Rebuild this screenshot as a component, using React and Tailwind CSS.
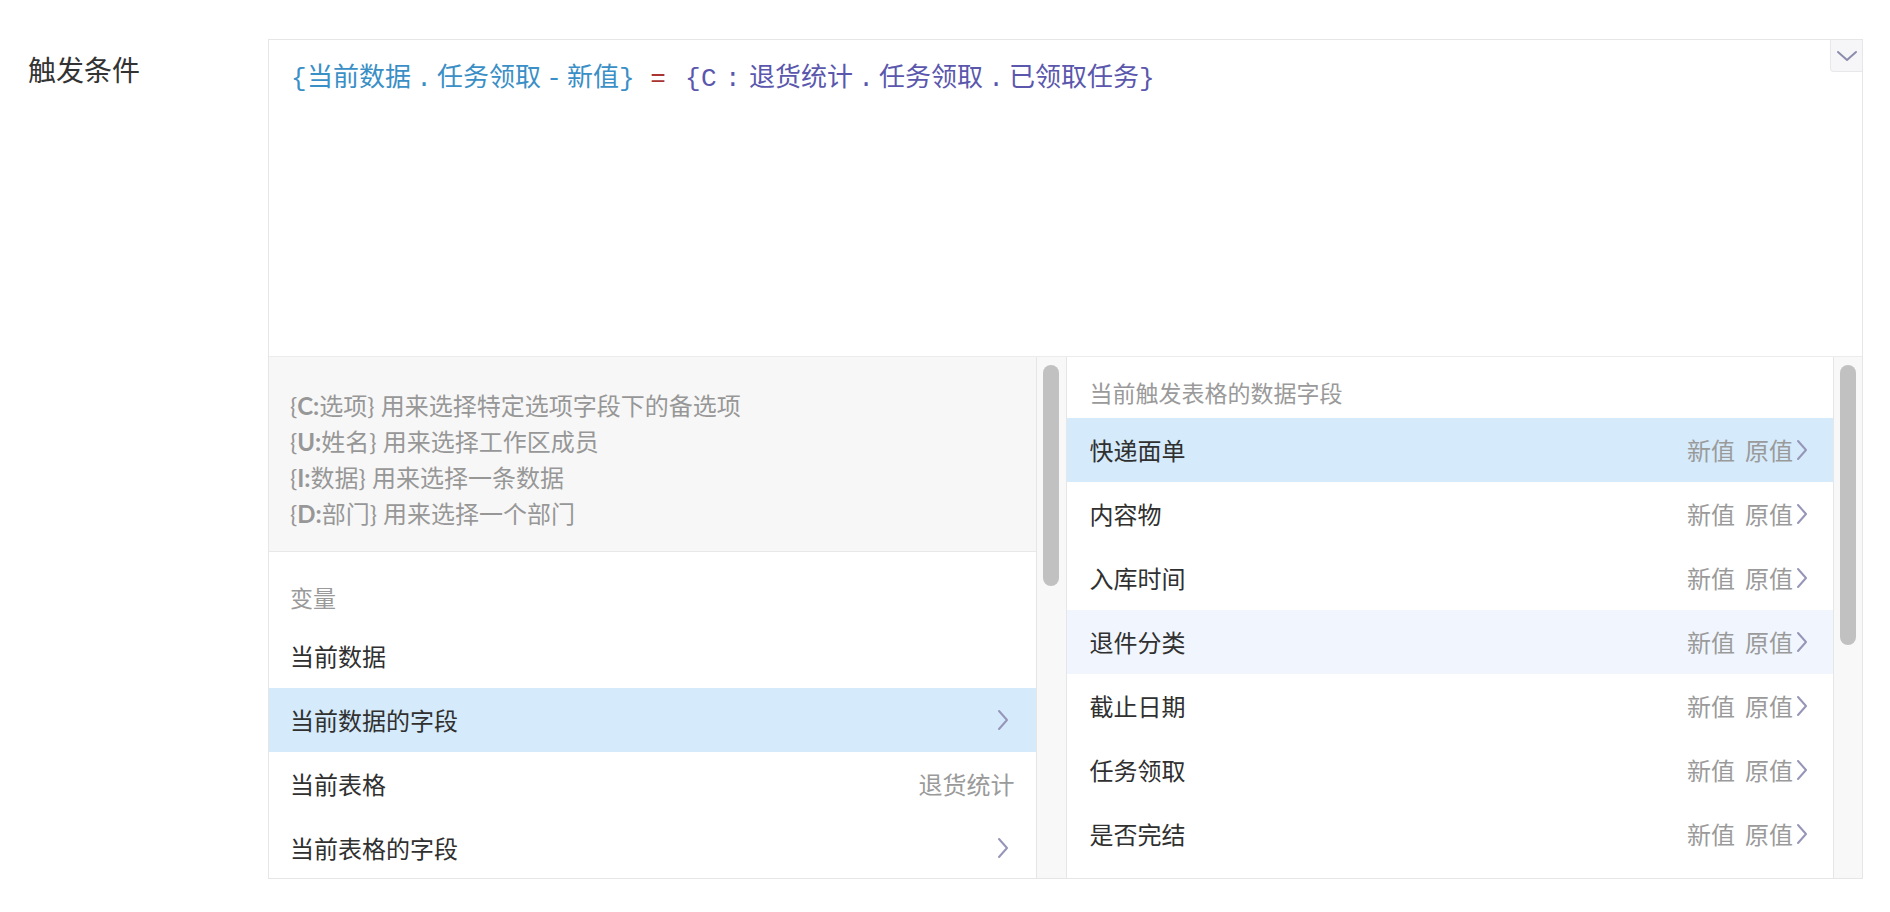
import React from "react";

const cjk = { fontFamily: '"Noto Sans CJK SC", "Noto Sans", sans-serif' };
const mono = { fontFamily: '"Liberation Mono", "Noto Sans CJK SC", monospace' };

function Chevron() {
  return (
    <svg width="14" height="24" viewBox="0 0 14 24">
      <polyline points="3,3 11,12 3,21" fill="none" stroke="#9595b8" strokeWidth="2" strokeLinecap="round" strokeLinejoin="round" />
    </svg>
  );
}

function Ob() {
  return <span className="inline-block w-[16px] text-left" style={mono}>{"{"}</span>;
}
function Cb() {
  return <span className="inline-block w-[12px] text-left" style={mono}>{"}"}</span>;
}
function P({ c }) {
  return <span className="inline-block w-[26px] text-center" style={mono}>{c}</span>;
}
function L({ c }) {
  return <span className="inline-block w-[24px] text-left" style={mono}>{c}</span>;
}
function M({ c }) {
  return <span className="inline-block w-[18px] text-center" style={mono}>{c}</span>;
}

const fields = ["快递面单", "内容物", "入库时间", "退件分类", "截止日期", "任务领取", "是否完结"];

export default function App() {
  return (
    <div className="min-h-screen bg-white pt-[39px] pl-[28px] flex" style={cjk}>
      <div className="w-[240px] mt-[12px] text-[28px] leading-[36px] text-[#333]">触发条件</div>
      <div className="w-[1595px] h-[840px] border border-[#e6e6e6] flex flex-col relative">
        <div className="absolute right-0 top-0 w-[32px] h-[32px] bg-[#f6f6f8] border-l border-b border-[#e8e8ea] rounded-bl-[4px] flex items-center justify-center">
          <svg width="22" height="12" viewBox="0 0 22 12">
            <polyline points="2,2 11,10 20,2" fill="none" stroke="#8c8cae" strokeWidth="2" strokeLinecap="round" strokeLinejoin="round" />
          </svg>
        </div>
        <div className="h-[317px] border-b border-[#ececec] pl-[22px] pt-[19px] text-[26px] leading-[32px] whitespace-nowrap">
          <span className="text-[#3a8fc6]"><Ob />当前数据<P c="." />任务领取<P c="-" />新值<Cb /></span>
          <span className="text-[#a33]"><M c={"\u00a0"} /><M c="=" /><M c={"\u00a0"} /></span>
          <span className="text-[#5a57ad]"><Ob /><L c="C" /><L c=":" />退货统计<P c="." />任务领取<P c="." />已领取任务<Cb /></span>
        </div>
        <div className="flex-1 flex min-h-0">
          <div className="flex-1 flex flex-col overflow-hidden">
            <div className="bg-[#f7f7f7] border-b border-[#e8e8e8] pt-[31px] pb-[19px] px-[21px] text-[24px] leading-[36px] text-[#979797]" style={{ fontFamily: 'Lato, "Noto Sans CJK SC", sans-serif' }}>
              <div>{"{"}<b>C:</b>选项{"}"} 用来选择特定选项字段下的备选项</div>
              <div>{"{"}<b>U:</b>姓名{"}"} 用来选择工作区成员</div>
              <div>{"{"}<b>I:</b>数据{"}"} 用来选择一条数据</div>
              <div>{"{"}<b>D:</b>部门{"}"} 用来选择一个部门</div>
            </div>
            <div className="pt-[31px] pb-[13px] px-[21px] text-[23px] leading-[28px] text-[#9a9a9a]">变量</div>
            <div className="h-[64px] shrink-0 flex items-center justify-between px-[21px] text-[24px] text-[#303030]">当前数据</div>
            <div className="h-[64px] shrink-0 flex items-center justify-between pl-[21px] pr-[26px] text-[24px] text-[#303030] bg-[#d5eafa]">
              <span>当前数据的字段</span>
              <Chevron />
            </div>
            <div className="h-[64px] shrink-0 flex items-center justify-between px-[21px] text-[24px] text-[#303030]">
              <span>当前表格</span>
              <span className="text-[24px] text-[#9a9a9a]">退货统计</span>
            </div>
            <div className="h-[64px] shrink-0 flex items-center justify-between pl-[21px] pr-[26px] text-[24px] text-[#303030]">
              <span>当前表格的字段</span>
              <Chevron />
            </div>
          </div>
          <div className="w-[31px] shrink-0 bg-[#f8f8f8] border-x border-[#e6e6e6] pt-[8px] flex justify-center">
            <div className="w-[16px] h-[221px] rounded-full bg-[#c1c1c1]" />
          </div>
          <div className="flex-1 flex flex-col overflow-hidden">
            <div className="pt-[21px] pb-[12px] px-[23px] text-[23px] leading-[28px] text-[#9a9a9a]">当前触发表格的数据字段</div>
            {fields.map((f, i) => (
              <div
                key={f}
                className={
                  "h-[64px] shrink-0 flex items-center justify-between pl-[23px] pr-[24px] text-[24px] text-[#303030] " +
                  (i === 0 ? "bg-[#d5eafa]" : i === 3 ? "bg-[#f1f6fe]" : "")
                }
              >
                <span>{f}</span>
                <span className="flex items-center text-[24px] text-[#9a9a9a]">
                  <span>新值</span>
                  <span className="ml-[10px]">原值</span>
                  <span className="ml-[2px]"><Chevron /></span>
                </span>
              </div>
            ))}
          </div>
          <div className="w-[29px] shrink-0 bg-[#f8f8f8] border-l border-[#e6e6e6] pt-[8px] flex justify-center">
            <div className="w-[16px] h-[280px] rounded-full bg-[#c1c1c1]" />
          </div>
        </div>
      </div>
    </div>
  );
}
